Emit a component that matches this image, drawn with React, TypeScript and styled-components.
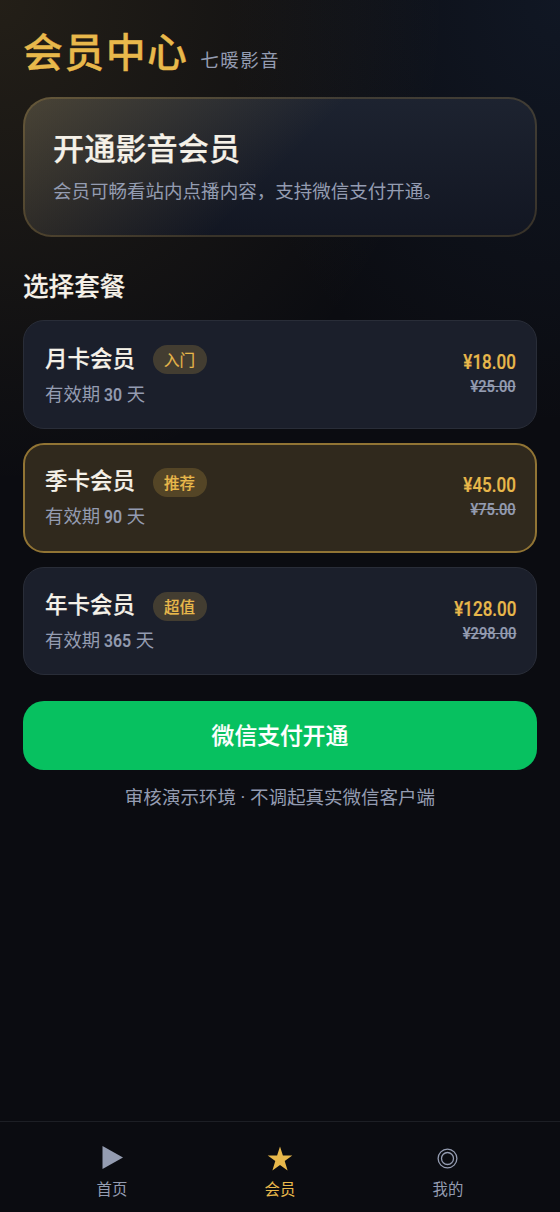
import React from 'react';
import styled, { createGlobalStyle } from 'styled-components';

const GOLD = '#e8b84b';
const MUTED = '#949cb1';
const IVORY = '#f5f1e8';

const GlobalStyle = createGlobalStyle`
  * { box-sizing: border-box; margin: 0; padding: 0; }
  body {
    margin: 0;
    background: #0b0c11;
    color: ${IVORY};
    font-family: 'Noto Sans CJK SC', sans-serif;
    -webkit-font-smoothing: antialiased;
  }
`;

const Page = styled.div`
  display: flex;
  flex-direction: column;
  width: 560px;
  height: 1212px;
  overflow: hidden;
  background:
    radial-gradient(ellipse 448px 485px at 0 0, rgba(232, 184, 75, 0.11), transparent),
    radial-gradient(ellipse 336px 424px at 100% 0, rgba(50, 90, 150, 0.14), transparent),
    #0b0c11;
`;

const Main = styled.main`
  flex: 1;
  padding: 21px 23px 0;
`;

const Header = styled.header`
  display: flex;
  align-items: baseline;
  height: 76px;
  letter-spacing: 1.43px;
`;

const Title = styled.h1`
  font-size: 39.9px;
  line-height: 58px;
  font-weight: 500;
  color: ${GOLD};
  -webkit-text-stroke: 0.3px;
`;

const Brand = styled.span`
  margin-left: 12px;
  font-size: 18.5px;
  color: ${MUTED};
`;

const Hero = styled.section`
  height: 140px;
  padding: 31px 28px 0;
  border: 2px solid rgba(232, 184, 75, 0.18);
  border-radius: 28.5px;
  background:
    linear-gradient(135deg, rgba(232, 184, 75, 0.22), transparent 50%) border-box,
    linear-gradient(180deg, #1d2330, #121622) border-box;
`;

const HeroTitle = styled.h2`
  font-size: 31.2px;
  line-height: 34px;
  font-weight: 500;
  -webkit-text-stroke: 0.25px;
`;

const HeroText = styled.p`
  margin-top: 11px;
  font-size: 18.52px;
  line-height: 30px;
  color: ${MUTED};
`;

const SectionTitle = styled.h2`
  margin: 30px 0 18px;
  font-size: 25.6px;
  line-height: 35px;
  font-weight: 500;
  -webkit-text-stroke: 0.2px;
`;

const PlanList = styled.div`
  display: flex;
  flex-direction: column;
  gap: 14px;
`;

const Plan = styled.article<{ $selected?: boolean }>`
  display: flex;
  justify-content: space-between;
  height: ${(p) => (p.$selected ? 110 : 108.5)}px;
  padding: ${(p) => (p.$selected ? '0 19px 0 20px' : '1px 20px 0 21px')};
  border: ${(p) => (p.$selected ? '2px solid #917434' : '1px solid #292d38')};
  border-radius: 21px;
  background: ${(p) => (p.$selected ? '#30291d' : '#1b1f2b')};
`;

const PlanInfo = styled.div`
  padding-top: 18px;
`;

const PlanHead = styled.div`
  display: flex;
  align-items: center;
  height: 33px;
`;

const PlanName = styled.h3`
  width: 90px;
  font-size: 22.5px;
  line-height: 32px;
  font-weight: 500;
  white-space: nowrap;
  -webkit-text-stroke: 0.2px;
`;

const Badge = styled.span<{ $strong?: boolean }>`
  margin: 6px 0 0 17.5px;
  padding: 0 11.5px;
  border-radius: 15px;
  font-size: 15.5px;
  line-height: 29px;
  font-weight: ${(p) => (p.$strong ? 500 : 400)};
  color: ${GOLD};
  background: rgba(232, 184, 75, 0.2);
  -webkit-text-stroke: 0.15px;
`;

const Validity = styled.p`
  margin-top: 5.5px;
  font-size: 18.4px;
  line-height: 28px;
  color: ${MUTED};
`;

const Days = styled.span<{ $width: number }>`
  display: inline-block;
  width: ${(p) => p.$width}px;
  margin: 0 4.5px 0 4px;
  font-family: Roboto, sans-serif;
  font-weight: 500;
  white-space: nowrap;
  transform: scaleX(0.86);
  transform-origin: left;
  -webkit-text-stroke: 0.2px;
`;

const Prices = styled.div`
  display: flex;
  flex-direction: column;
  align-items: flex-end;
  padding-top: 28px;
  font-family: Roboto, sans-serif;
  font-weight: 500;
`;

const Price = styled.span`
  font-size: 20.4px;
  line-height: 24px;
  color: ${GOLD};
  transform: scaleX(0.835);
  transform-origin: right;
  -webkit-text-stroke: 0.2px;
`;

const OldPrice = styled(Price)`
  font-size: 17.1px;
  color: ${MUTED};
  text-decoration: line-through;
  transform: scaleX(0.86);
`;

const PayButton = styled.button`
  display: block;
  width: 100%;
  height: 69px;
  margin-top: 25.5px;
  padding-bottom: 1px;
  border: 0;
  border-radius: 21px;
  background: #07c160;
  color: #fff;
  font-family: inherit;
  font-size: 22.8px;
  font-weight: 500;
  -webkit-text-stroke: 0.2px;
`;

const Note = styled.p`
  margin-top: 12.5px;
  text-align: center;
  font-size: 18.52px;
  line-height: 28px;
  color: ${MUTED};
`;

const Dot = styled.span`
  font-family: Roboto, sans-serif;
`;

const TabBar = styled.nav`
  display: flex;
  height: 91px;
  padding: 0 28px;
  border-top: 1px solid #1d1f25;
  background: #0b0c11;
`;

const Tab = styled.a<{ $active?: boolean }>`
  flex: 1;
  display: flex;
  flex-direction: column;
  align-items: center;
  padding-top: 22px;
  font-size: 15.4px;
  line-height: 24px;
  color: ${(p) => (p.$active ? GOLD : MUTED)};
`;

const TabIcon = styled.svg`
  width: 30px;
  height: 30px;
  margin-bottom: 2px;
`;

const plans = [
  { name: '月卡会员', tag: '入门', days: '30', price: '¥18.00', old: '¥25.00' },
  { name: '季卡会员', tag: '推荐', days: '90', price: '¥45.00', old: '¥75.00', selected: true },
  { name: '年卡会员', tag: '超值', days: '365', price: '¥128.00', old: '¥298.00' },
];

export default function App() {
  return (
    <>
      <GlobalStyle />
      <Page>
        <Main>
          <Header>
            <Title>会员中心</Title>
            <Brand>七暖影音</Brand>
          </Header>
          <Hero>
            <HeroTitle>开通影音会员</HeroTitle>
            <HeroText>会员可畅看站内点播内容，支持微信支付开通。</HeroText>
          </Hero>
          <SectionTitle>选择套餐</SectionTitle>
          <PlanList>
            {plans.map((p) => (
              <Plan key={p.name} $selected={p.selected}>
                <PlanInfo>
                  <PlanHead>
                    <PlanName>{p.name}</PlanName>
                    <Badge $strong={p.tag !== '入门'}>{p.tag}</Badge>
                  </PlanHead>
                  <Validity>
                    有效期
                    <Days $width={p.days.length * 9}>{p.days}</Days>天
                  </Validity>
                </PlanInfo>
                <Prices>
                  <Price>{p.price}</Price>
                  <OldPrice>{p.old}</OldPrice>
                </Prices>
              </Plan>
            ))}
          </PlanList>
          <PayButton>微信支付开通</PayButton>
          <Note>
            审核演示环境<Dot> · </Dot>不调起真实微信客户端
          </Note>
        </Main>
        <TabBar>
          <Tab>
            <TabIcon viewBox="0 0 30 30">
              <path d="M5.5 2 26 13.5 5.5 25Z" fill="currentColor" />
            </TabIcon>
            首页
          </Tab>
          <Tab $active>
            <TabIcon viewBox="0 0 30 30">
              <path d="M15 2.5 17.9 11.5H27.3L19.7 17.1 22.6 26.5 15 20.9 7.4 26.5 10.3 17.1 2.7 11.5H12.1Z" fill="currentColor" />
            </TabIcon>
            会员
          </Tab>
          <Tab>
            <TabIcon viewBox="0 0 30 30" fill="none" stroke="currentColor" strokeWidth="1.3">
              <circle cx="14.5" cy="14.5" r="9.4" />
              <circle cx="14.5" cy="14.5" r="6" />
            </TabIcon>
            我的
          </Tab>
        </TabBar>
      </Page>
    </>
  );
}
